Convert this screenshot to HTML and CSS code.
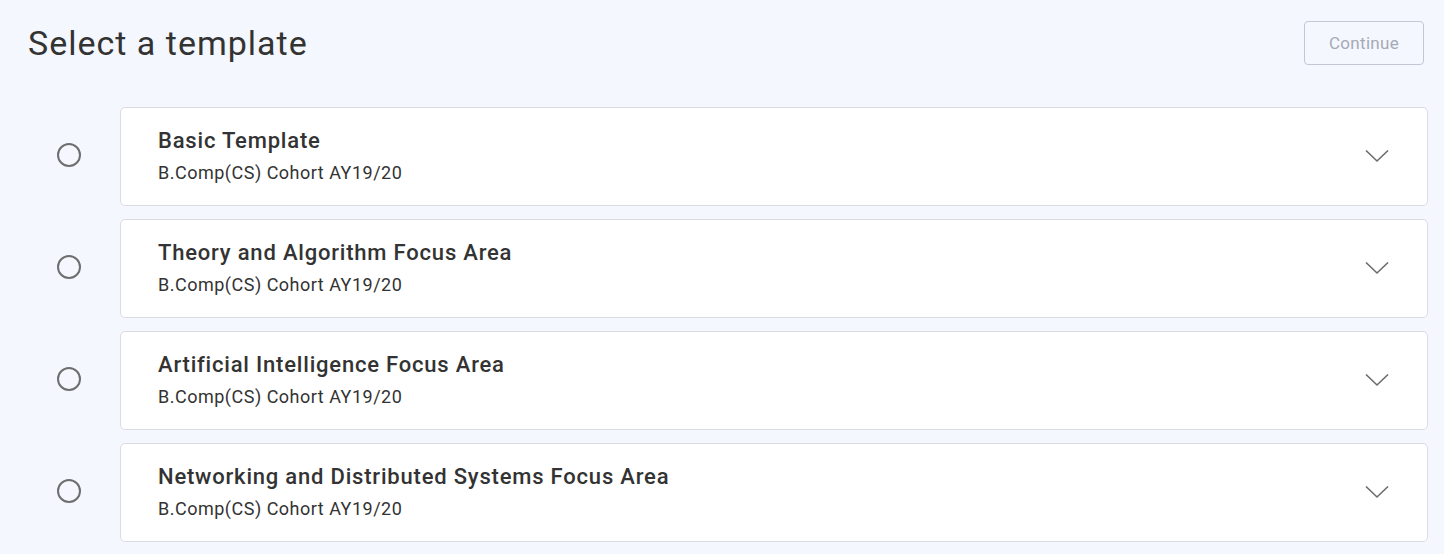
FILE: index.html
```html
<!DOCTYPE html>
<html>
<head>
<meta charset="utf-8">
<link rel="stylesheet" href="styles.css">
</head>
<body>
<div class="page">
  <header class="header">
    <h1 class="title">Select a template</h1>
    <button class="continue" disabled>Continue</button>
  </header>
  <div class="list">
    <div class="row">
      <div class="radio-cell"><span class="radio"></span></div>
      <div class="card">
        <div class="card-text">
          <div class="card-title">Basic Template</div>
          <div class="card-sub">B.Comp(CS) Cohort AY19/20</div>
        </div>
        <svg class="chev" width="24" height="14" viewBox="0 0 24 14"><path d="M1 1.5 L12 12 L23 1.5" fill="none" stroke="#6b6b6b" stroke-width="1.6"/></svg>
      </div>
    </div>
    <div class="row">
      <div class="radio-cell"><span class="radio"></span></div>
      <div class="card">
        <div class="card-text">
          <div class="card-title">Theory and Algorithm Focus Area</div>
          <div class="card-sub">B.Comp(CS) Cohort AY19/20</div>
        </div>
        <svg class="chev" width="24" height="14" viewBox="0 0 24 14"><path d="M1 1.5 L12 12 L23 1.5" fill="none" stroke="#6b6b6b" stroke-width="1.6"/></svg>
      </div>
    </div>
    <div class="row">
      <div class="radio-cell"><span class="radio"></span></div>
      <div class="card">
        <div class="card-text">
          <div class="card-title">Artificial Intelligence Focus Area</div>
          <div class="card-sub">B.Comp(CS) Cohort AY19/20</div>
        </div>
        <svg class="chev" width="24" height="14" viewBox="0 0 24 14"><path d="M1 1.5 L12 12 L23 1.5" fill="none" stroke="#6b6b6b" stroke-width="1.6"/></svg>
      </div>
    </div>
    <div class="row">
      <div class="radio-cell"><span class="radio"></span></div>
      <div class="card">
        <div class="card-text">
          <div class="card-title">Networking and Distributed Systems Focus Area</div>
          <div class="card-sub">B.Comp(CS) Cohort AY19/20</div>
        </div>
        <svg class="chev" width="24" height="14" viewBox="0 0 24 14"><path d="M1 1.5 L12 12 L23 1.5" fill="none" stroke="#6b6b6b" stroke-width="1.6"/></svg>
      </div>
    </div>
  </div>
</div>
</body>
</html>
```
FILE: styles.css
```css
* { box-sizing: border-box; }
html, body { margin: 0; padding: 0; }
body {
  background: #f4f7fd;
  font-family: Roboto, "Noto Sans", sans-serif;
  color: #333;
}
.page {
  padding: 21px 16px 0 28px;
}
.header {
  display: flex;
  justify-content: space-between;
  align-items: center;
  height: 43px;
  padding-right: 4px;
}
.title {
  margin: 0;
  font-size: 34px;
  font-weight: 400;
  letter-spacing: 1px;
  color: #333;
}
.continue {
  width: 120px;
  height: 44px;
  border: 1px solid #c3c7d3;
  border-radius: 4px;
  background: transparent;
  color: #a6a9b7;
  font-family: Roboto, sans-serif;
  font-size: 17px;
  letter-spacing: 0.3px;
  margin-top: 1px;
}
.list {
  margin-top: 43px;
  display: flex;
  flex-direction: column;
  gap: 13px;
}
.row {
  display: flex;
  align-items: center;
}
.radio-cell {
  width: 92px;
  display: flex;
  padding-left: 29px;
  margin-top: -3px;
}
.radio {
  display: block;
  width: 24px;
  height: 24px;
  border: 2px solid #6e6e6e;
  border-radius: 50%;
}
.card {
  flex: 1;
  height: 99px;
  background: #fff;
  border: 1px solid #d9dce4;
  border-radius: 5px;
  display: flex;
  align-items: center;
  justify-content: space-between;
  padding: 0 38px 0 37px;
}
.card-text {
  display: flex;
  flex-direction: column;
  gap: 9px;
  margin-top: -3px;
}
.card-title {
  font-size: 22px;
  font-weight: 500;
  letter-spacing: 0.8px;
  color: #333;
}
.card-sub {
  font-size: 18px;
  letter-spacing: 0.5px;
  color: #333;
}
.chev {
  display: block;
  margin-top: -1px;
}
```
